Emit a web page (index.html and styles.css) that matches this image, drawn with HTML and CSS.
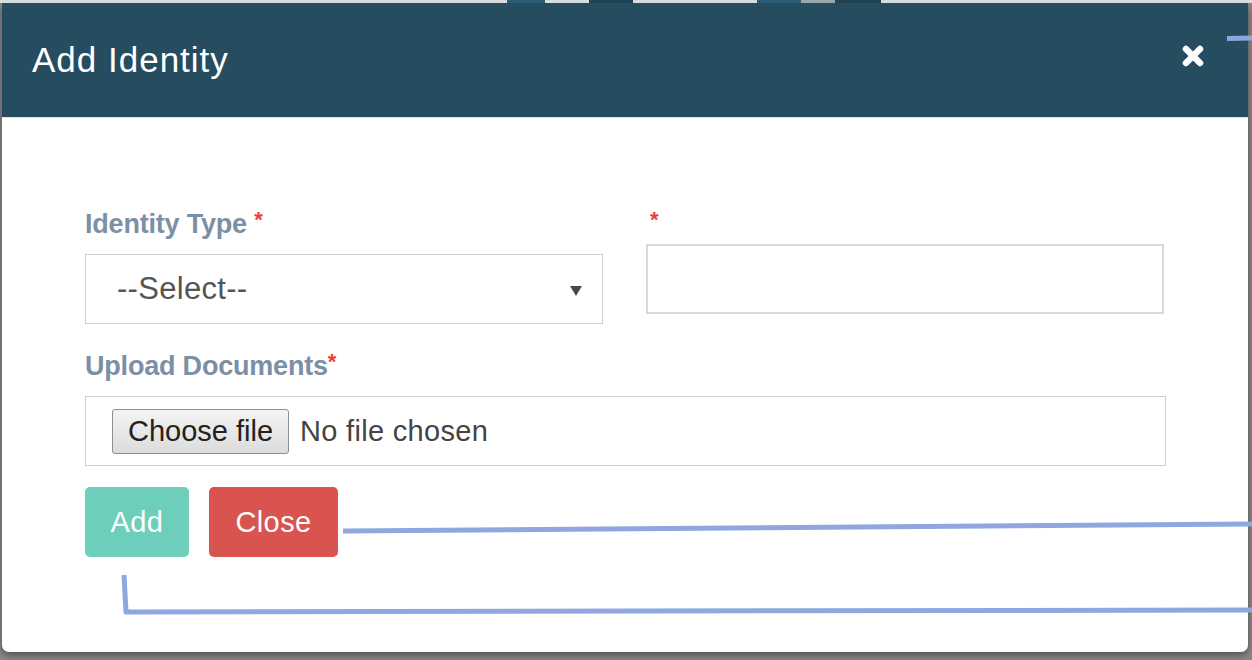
FILE: index.html
```html
<!DOCTYPE html>
<html>
<head>
<meta charset="utf-8">
<link rel="stylesheet" href="styles.css">
</head>
<body>
<div class="page-strip">
  <span class="seg light" style="width:507px"></span>
  <span class="seg teal" style="width:38px"></span>
  <span class="seg light" style="width:44px"></span>
  <span class="seg dark" style="width:44px"></span>
  <span class="seg light" style="width:124px"></span>
  <span class="seg teal" style="width:44px"></span>
  <span class="seg grey" style="width:34px"></span>
  <span class="seg dark" style="width:46px"></span>
  <span class="seg light" style="width:371px"></span>
</div>
<div class="modal">
  <div class="modal-header">
    <h4 class="modal-title">Add Identity</h4>
    <button class="close-x" aria-label="Close">
      <svg width="24" height="24" viewBox="0 0 24 24"><path d="M5 5 L19 19 M19 5 L5 19" stroke="#fff" stroke-width="6.5" stroke-linecap="round" fill="none"/></svg>
    </button>
  </div>
  <div class="modal-body">
    <div class="row two-col">
      <div class="field">
        <label class="label">Identity Type <span class="req">*</span></label>
        <div class="select">
          <span>--Select--</span>
          <svg width="12" height="11" viewBox="0 0 12 11"><path d="M0 1 L12 1 L6 11 Z" fill="#4a4a4a"/></svg>
        </div>
      </div>
      <div class="field">
        <label class="label short"><span class="req">*</span></label>
        <div class="text-input"></div>
      </div>
    </div>
    <div class="row">
      <label class="label">Upload Documents<span class="req">*</span></label>
      <div class="file-box">
        <span class="file-btn">Choose file</span>
        <span class="file-name">No file chosen</span>
      </div>
    </div>
    <div class="actions">
      <button class="btn btn-add">Add</button>
      <button class="btn btn-close">Close</button>
    </div>
  </div>
</div>
<svg class="annotations" width="1252" height="660" viewBox="0 0 1252 660">
  <g stroke="#8ea7de" stroke-width="5" fill="none" stroke-linejoin="round">
    <path d="M1227 38.5 L1252 38"/>
    <path d="M343 531 L1252 524"/>
    <path d="M124 575 L126 612 L1252 610"/>
  </g>
</svg>
</body>
</html>
```
FILE: styles.css
```css
* { box-sizing: border-box; }
html, body { margin: 0; padding: 0; }
body {
  background: #8a8a8a;
  font-family: "Liberation Sans", Arial, sans-serif;
  width: 1252px;
  height: 660px;
  overflow: hidden;
  position: relative;
}
.page-strip { display: flex; height: 3px; }
.seg { display: block; height: 3px; }
.seg.light { background: #d9dcdd; }
.seg.teal { background: #2b5d74; }
.seg.dark { background: #1f4354; }
.seg.grey { background: #9aa7ad; }

.modal {
  margin: 0 4px 0 2px;
  width: 1246px;
  height: 649px;
  background: #fff;
  border-radius: 0 0 7px 7px;
  box-shadow: 0 3px 8px rgba(0,0,0,.45);
  overflow: hidden;
}
.modal-header {
  height: 115px;
  background: #264c5f;
  border-bottom: 1px solid #e5e5e5;
  display: flex;
  align-items: flex-start;
  justify-content: space-between;
  padding: 0 43px 0 30px;
}
.modal-title {
  margin: 0;
  padding-top: 37px;
  color: #fff;
  font-weight: normal;
  font-size: 35px;
  line-height: 40px;
  letter-spacing: 1px;
}
.close-x {
  background: none;
  border: 0;
  padding: 0;
  margin-top: 41px;
  width: 24px;
  height: 24px;
  display: flex;
}
.modal-body {
  padding: 88px 82px 0 83px;
}
.two-col {
  display: grid;
  grid-template-columns: 518px 518px;
  column-gap: 43px;
  align-items: start;
  margin-bottom: 24px;
}
.label {
  display: block;
  color: #7b8fa6;
  font-weight: bold;
  font-size: 27px;
  line-height: 36px;
  height: 36px;
  margin-bottom: 12px;
  letter-spacing: -0.2px;
}
.label.short { height: 26px; line-height: 30px; padding-left: 4px; }
.req { color: #ee3b3b; font-size: 22px; vertical-align: top; line-height: 28px; }
.select {
  height: 70px;
  border: 1px solid #cfcfcf;
  display: flex;
  align-items: center;
  justify-content: space-between;
  padding: 0 20px 0 31px;
  color: #555;
  font-size: 31px;
  letter-spacing: 0.3px;
}
.select svg { margin-top: 2px; }
.text-input {
  height: 70px;
  border: 2px solid #d9d9d9;
}
.file-box {
  height: 70px;
  border: 1px solid #cfcfcf;
  display: flex;
  align-items: center;
  padding-left: 26px;
  gap: 11px;
}
.file-btn {
  height: 45px;
  padding: 0 15px;
  display: flex;
  align-items: center;
  font-size: 29px;
  color: #222;
  background: linear-gradient(#f4f4f4, #dcdcdc);
  border: 1px solid #8f8f8f;
  border-radius: 3px;
  letter-spacing: 0;
}
.file-name {
  font-size: 29px;
  color: #444;
  letter-spacing: 0.3px;
}
.actions {
  display: flex;
  gap: 20px;
  margin-top: 21px;
}
.btn {
  height: 70px;
  border: 0;
  border-radius: 5px;
  color: #fdfdfd;
  font-family: "Liberation Sans", Arial, sans-serif;
  font-size: 29px;
  letter-spacing: 0.4px;
  padding: 0;
}
.btn-add { width: 104px; background: #6dcfbb; }
.btn-close { width: 129px; background: #d9534f; }
.annotations {
  position: absolute;
  left: 0;
  top: 0;
  pointer-events: none;
}
```
